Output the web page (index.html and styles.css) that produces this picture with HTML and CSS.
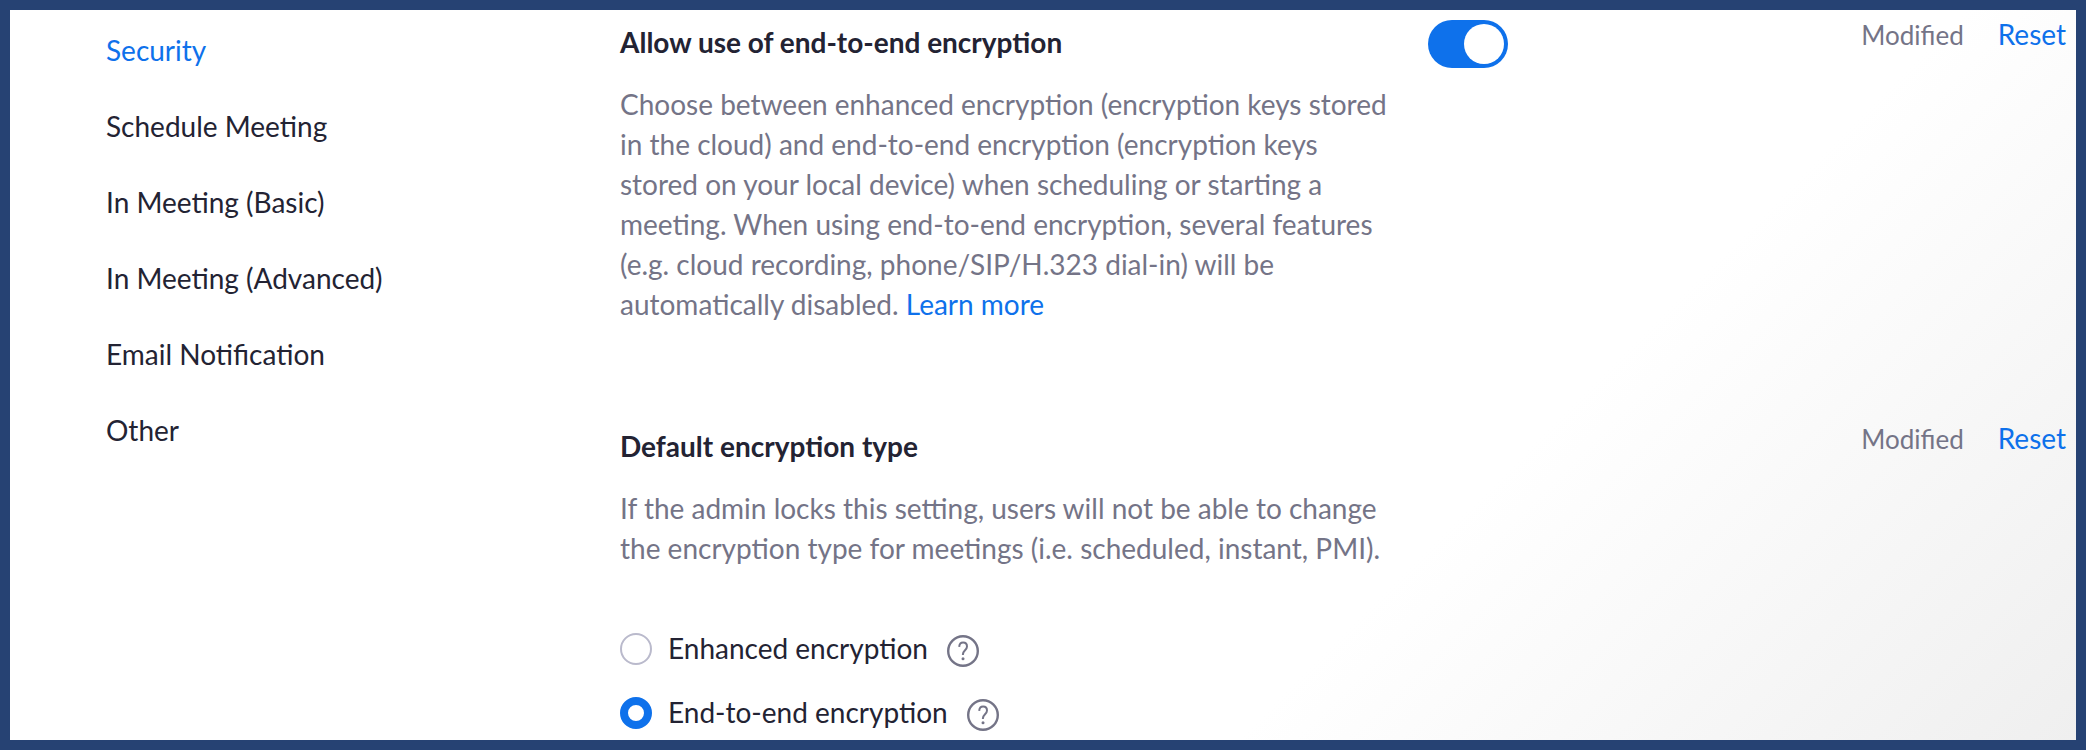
FILE: index.html
```
<!DOCTYPE html>
<html lang="en">
<head>
    <meta charset="UTF-8">
    <meta name="viewport" content="width=device-width, initial-scale=1.0">
    <title>Meeting Settings</title>
    <link rel="stylesheet" href="styles.css">
</head>

<body>
    <div class="page">
        <nav class="side-nav">
            <a href="#security" class="active">Security</a>
            <a href="#schedule">Schedule Meeting</a>
            <a href="#basic">In Meeting (Basic)</a>
            <a href="#advanced">In Meeting (Advanced)</a>
            <a href="#email">Email Notification</a>
            <a href="#other">Other</a>
        </nav>

        <main class="settings">
            <section class="setting">
                <div class="setting-body">
                    <h2><label for="e2e-toggle">Allow use of end-to-end encryption</label></h2>
                    <p>Choose between enhanced encryption (encryption keys stored in the cloud) and end-to-end encryption (encryption keys stored on your local device) when scheduling or starting a meeting. When using end-to-end encryption, several features (e.g. cloud recording, phone/SIP/H.323 dial-in) will be automatically disabled. <a href="#learn-more">Learn more</a></p>
                </div>
                <input type="checkbox" id="e2e-toggle" class="toggle" checked>
                <div class="setting-status">
                    <span class="modified">Modified</span>
                    <a href="#reset">Reset</a>
                </div>
            </section>

            <section class="setting">
                <div class="setting-body">
                    <h2>Default encryption type</h2>
                    <p>If the admin locks this setting, users will not be able to change the encryption type for meetings (i.e. scheduled, instant, PMI).</p>
                    <div class="options">
                        <div class="option">
                            <input type="radio" name="encryption" id="enhanced">
                            <label for="enhanced">Enhanced encryption</label>
                            <button type="button" class="help" aria-label="About enhanced encryption">
                                <svg viewBox="0 0 32 32" width="32" height="32">
                                    <circle class="ring" cx="16" cy="16" r="14.800"/>
                                    <path d="M12.200 11.800c.2-2.600 1.600-4.200 3.900-4.200 2.200 0 3.900 1.500 3.900 3.900 0 3.600-4.100 3.900-4.100 7.900v.6"/>
                                    <circle class="dot" cx="16" cy="23.800" r="1.500"/>
                                </svg>
                            </button>
                        </div>
                        <div class="option">
                            <input type="radio" name="encryption" id="end-to-end" checked>
                            <label for="end-to-end">End-to-end encryption</label>
                            <button type="button" class="help" aria-label="About end-to-end encryption">
                                <svg viewBox="0 0 32 32" width="32" height="32">
                                    <circle class="ring" cx="16" cy="16" r="14.800"/>
                                    <path d="M12.200 11.800c.2-2.600 1.600-4.200 3.900-4.200 2.200 0 3.900 1.500 3.900 3.900 0 3.600-4.100 3.900-4.100 7.900v.6"/>
                                    <circle class="dot" cx="16" cy="23.800" r="1.500"/>
                                </svg>
                            </button>
                        </div>
                    </div>
                </div>
                <div class="setting-status">
                    <span class="modified">Modified</span>
                    <a href="#reset">Reset</a>
                </div>
            </section>
        </main>
    </div>
</body>
</html>
```
FILE: styles.css
```
* {
    box-sizing: border-box;
}

body {
    margin: 0;
    font-family: Lato, "Liberation Sans", sans-serif;
    font-size: 28px;
    line-height: 40px;
    color: #232333;
}

a {
    color: #0e71eb;
    text-decoration: none;
}

.page {
    display: flex;
    min-height: 100vh;
    border: 10px solid #264273;
    background: linear-gradient(135deg, #ffffff 70%, #f6f6f6 87%, #efefef 100%);
}

/* Left navigation */
.side-nav {
    flex: 0 0 610px;
    display: flex;
    flex-direction: column;
    gap: 36px;
    padding: 20px 40px 0 96px;
}

.side-nav a {
    color: #232333;
}

.side-nav a.active {
    color: #0e71eb;
}

/* Settings list */
.settings {
    flex: 1;
    padding: 4px 10px 0 0;
}

.setting {
    display: flex;
    align-items: flex-start;
}

.setting + .setting {
    margin-top: 94px;
}

.setting-body {
    flex: 0 1 768px;
    padding-top: 8px;
}

.setting h2 {
    margin: 0 0 22px;
    font-size: 28px;
    font-weight: bold;
}

.setting p {
    margin: 0;
    color: #747487;
}

.setting-status {
    display: flex;
    align-items: baseline;
    gap: 34px;
    margin-left: auto;
}

.modified {
    font-size: 26px;
    color: #747487;
}

.toggle {
    appearance: none;
    flex: none;
    display: flex;
    justify-content: flex-end;
    width: 80px;
    height: 48px;
    margin: 6px 0 0 40px;
    padding: 4px;
    border-radius: 24px;
    background: #0e71eb;
    cursor: pointer;
}

.toggle::before {
    content: "";
    width: 40px;
    height: 40px;
    border-radius: 50%;
    background: #ffffff;
}

.toggle:not(:checked) {
    justify-content: flex-start;
    background: #babacc;
}

/* Radio options */
.options {
    display: flex;
    flex-direction: column;
    gap: 24px;
    margin-top: 60px;
}

.option {
    display: flex;
    align-items: center;
}

.option input {
    appearance: none;
    width: 32px;
    height: 32px;
    margin: 2px 16px 0 0;
    border: 2px solid #babacc;
    border-radius: 50%;
    background: #ffffff;
}

.option input:checked {
    border: 8px solid #0e71eb;
}

.help {
    display: flex;
    margin: 6px 0 0 19px;
    padding: 0;
    border: none;
    background: none;
    cursor: pointer;
}

.help svg {
    fill: none;
    stroke: #747487;
    stroke-width: 2;
}

.help .ring {
    stroke-width: 2.4;
}

.help .dot {
    fill: #747487;
    stroke: none;
}
```
